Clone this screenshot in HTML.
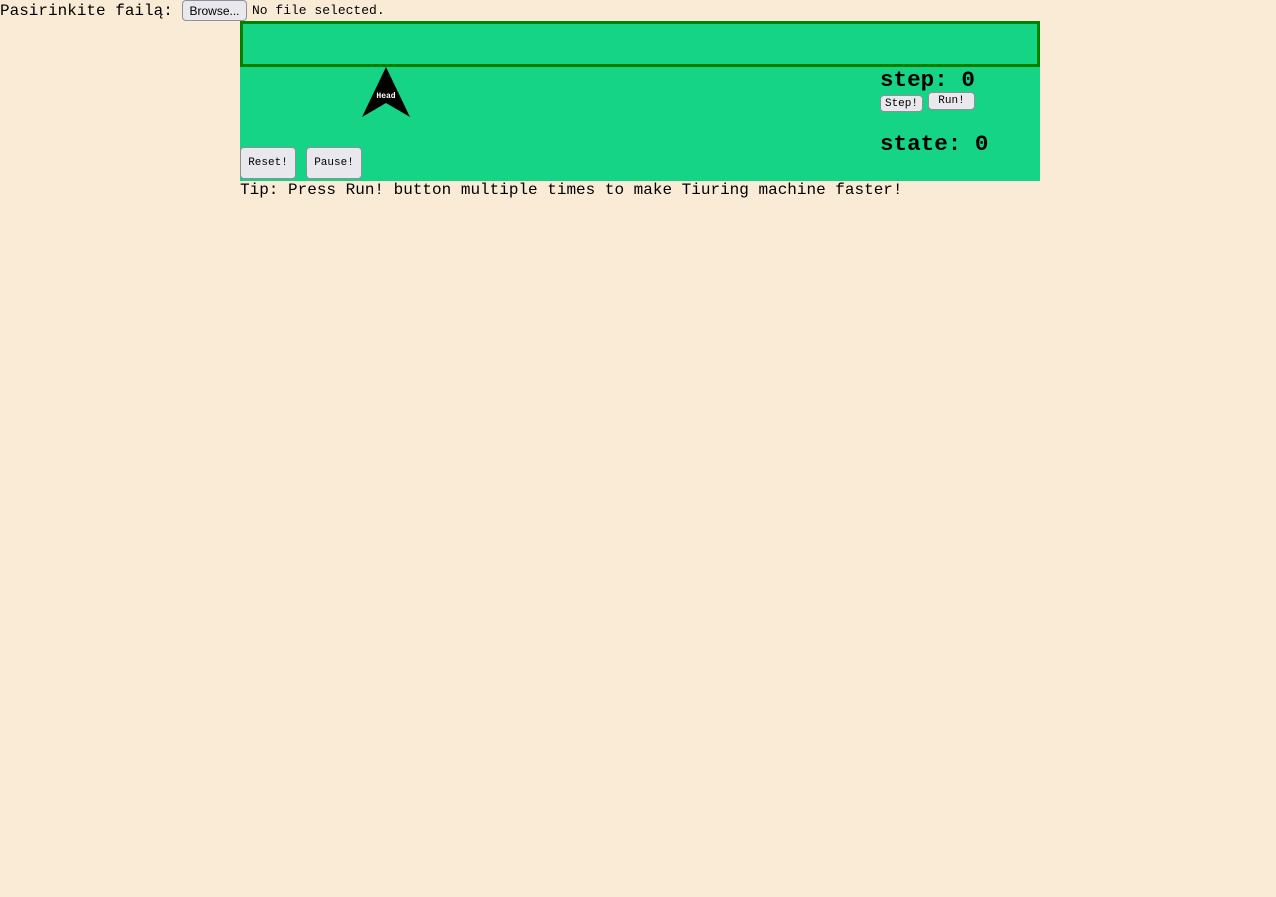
<!DOCTYPE html>
<html><head><meta charset="utf-8"><style>
body{margin:0;background:#faebd7;font-family:"Liberation Mono",monospace;width:1276px;height:897px;position:relative;overflow:hidden}
.a{position:absolute;white-space:nowrap}
.btn{position:absolute;background:#e9e9ed;border:1px solid #8f8f9d;border-radius:4px;font-family:"Liberation Mono",monospace;font-size:11px;color:#000;display:flex;align-items:center;justify-content:center;box-sizing:border-box}
</style></head><body>
<div class="a" style="left:0;top:2px;font-size:16px;line-height:18px">Pasirinkite failą:</div>
<div class="btn" style="left:182px;top:0;width:65px;height:21px;font-family:'Liberation Sans',sans-serif;font-size:12px">Browse...</div>
<div class="a" style="left:252px;top:4px;font-size:13px;line-height:14px">No file selected.</div>
<div class="a" style="left:240px;top:21px;width:800px;height:160px;background:#16d486"></div>
<div class="a" style="left:240px;top:21px;width:800px;height:46px;border:3px solid #008000;box-sizing:border-box"></div>
<svg class="a" style="left:361px;top:67px" width="50" height="50"><polygon points="25,0 49,50 25,36 1,50" fill="#000"/><text x="25" y="31" fill="#fff" font-size="8" font-weight="bold" text-anchor="middle" font-family="Liberation Mono">Head</text></svg>
<div class="a" style="left:880px;top:66px;font-size:22.6px;font-weight:bold;line-height:28px">step: 0</div>
<div class="btn" style="left:880px;top:95px;width:43px;height:17px">Step!</div>
<div class="btn" style="left:928px;top:92px;width:47px;height:18px">Run!</div>
<div class="a" style="left:880px;top:130px;font-size:22.6px;font-weight:bold;line-height:28px">state: 0</div>
<div class="btn" style="left:240px;top:147px;width:56px;height:32px">Reset!</div>
<div class="btn" style="left:306px;top:147px;width:56px;height:32px">Pause!</div>
<div class="a" style="left:240px;top:181px;font-size:16px;line-height:18px">Tip: Press Run! button multiple times to make Tiuring machine faster!</div>
</body></html>
